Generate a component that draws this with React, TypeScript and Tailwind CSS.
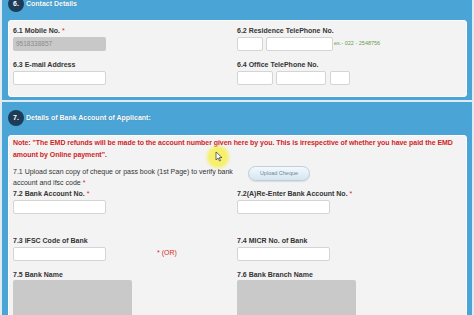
export default function App() {
  const label = "text-[7px] leading-[10px] font-bold text-[#333]";
  const input = "mt-[1px] h-[14px] bg-white border border-[#d4d4d4] rounded-[2px]";

  return (
    <div className="relative w-[474px] h-[315px] overflow-hidden bg-[#dfeaf1] font-['Liberation_Sans',Arial,sans-serif]">
      {/* Section 6: Contact details */}
      <div className="mx-[2px] mt-[-6px] bg-[#4aa5d6] pl-[6px] pr-[5px] pt-[2px] pb-[3px]">
        <div className="flex items-center h-[16px]">
          <div className="w-[16px] h-[16px] rounded-full bg-[#1e3b57] flex items-center justify-center text-[7px] font-bold text-white">
            6.
          </div>
          <span className="ml-[2px] text-[7px] font-bold text-white [text-shadow:0_0_1px_rgba(0,0,0,0.3)]">
            Contact Details
          </span>
        </div>

        <div className="mt-[8px] bg-[#f3f3f3] border border-white rounded-[3px] px-[4px] pt-[5px] pb-[11px]">
          <div className="grid grid-cols-[224px_1fr]">
            <div>
              <div className={label}>
                6.1 Mobile No. <span className="text-[#d22] font-normal">*</span>
              </div>
              <div className="mt-[1px] h-[14px] w-[93px] bg-[#c8c8c8] rounded-[2px] flex items-center pl-[3px] text-[6.5px] text-[#8c8c8c]">
                9518338857
              </div>
            </div>
            <div>
              <div className={label}>6.2 Residence TelePhone No.</div>
              <div className="flex items-center">
                <div className={`${input} w-[26px]`} />
                <div className={`${input} w-[67px] ml-[3px]`} />
                <span className="ml-[1px] text-[5.5px] text-[#6a9a52]">ex.- 022 - 2548756</span>
              </div>
            </div>

            <div className="mt-[9px]">
              <div className={label}>6.3 E-mail Address</div>
              <div className={`${input} w-[93px]`} />
            </div>
            <div className="mt-[9px]">
              <div className={label}>6.4 Office TelePhone No.</div>
              <div className="flex">
                <div className={`${input} w-[36px]`} />
                <div className={`${input} w-[50px] ml-[3px]`} />
                <div className={`${input} w-[20px] ml-[4px]`} />
              </div>
            </div>
          </div>
        </div>
      </div>

      {/* Section 7: Bank account */}
      <div className="mx-[2px] mt-[2px] bg-[#4aa5d6] pl-[6px] pr-[5px] pt-[8px] pb-[20px]">
        <div className="flex items-center h-[16px]">
          <div className="w-[16px] h-[16px] rounded-full bg-[#1e3b57] flex items-center justify-center text-[7px] font-bold text-white">
            7.
          </div>
          <span className="ml-[2px] text-[7px] font-bold text-white [text-shadow:0_0_1px_rgba(0,0,0,0.3)]">
            Details of Bank Account of Applicant:
          </span>
        </div>

        <div className="mt-[9px] bg-[#f3f3f3] border border-white rounded-[3px] px-[4px] pt-[1px] pb-[10px]">
          <p className="text-[7px] leading-[12px] font-bold text-[#cf1f1f] tracking-[-0.05px]">
            Note: "The EMD refunds will be made to the account number given here by you. This is irrespective of whether you have paid the EMD
            <br />
            amount by Online payment".
          </p>

          <div className="mt-[5px] flex items-start">
            <p className="w-[224px] text-[7px] leading-[11px] text-[#333]">
              7.1 Upload scan copy of cheque or pass book (1st Page) to verify bank
              <br />
              account and ifsc code <span className="text-[#d22]">*</span>
            </p>
            <button className="ml-[11px] h-[15px] w-[62px] rounded-full border border-[#b9d0de] bg-gradient-to-b from-[#f4f9fc] to-[#d5e5ef] text-[5.5px] text-[#6c86a0] shadow-[0_1px_1px_rgba(0,0,0,0.1)]">
              Upload Cheque
            </button>
          </div>

          <div className="mt-[1px] grid grid-cols-[224px_1fr]">
            <div>
              <div className={label}>
                7.2 Bank Account No. <span className="text-[#d22] font-normal">*</span>
              </div>
              <div className={`${input} w-[93px]`} />
            </div>
            <div>
              <div className={label}>
                7.2(A)Re-Enter Bank Account No. <span className="text-[#d22] font-normal">*</span>
              </div>
              <div className={`${input} w-[93px]`} />
            </div>

            <div className="mt-[22px]">
              <div className={label}>7.3 IFSC Code of Bank</div>
              <div className="flex items-center">
                <div className={`${input} w-[93px]`} />
                <span className="ml-[51px] text-[7px] text-[#d42a2a]">* (OR)</span>
              </div>
            </div>
            <div className="mt-[22px]">
              <div className={label}>7.4 MICR No. of Bank</div>
              <div className={`${input} w-[93px]`} />
            </div>

            <div className="mt-[9px]">
              <div className={label}>7.5 Bank Name</div>
              <div className="h-[45px] w-[119px] bg-[#c9c9c9] rounded-[2px]" />
            </div>
            <div className="mt-[9px]">
              <div className={label}>7.6 Bank Branch Name</div>
              <div className="h-[45px] w-[119px] bg-[#c9c9c9] rounded-[2px]" />
            </div>
          </div>
        </div>
      </div>

      {/* cursor highlight */}
      <div className="absolute left-[207px] top-[146px] w-[22px] h-[22px] rounded-full bg-[#f6ef4a]/80 blur-[1.5px]" />
      <svg className="absolute left-[215px] top-[151px]" width="8" height="11" viewBox="0 0 8 11">
        <path d="M1 1 L1 9 L3 7 L4.5 10 L5.6 9.5 L4.2 6.6 L7 6.6 Z" fill="white" stroke="#333" strokeWidth="0.7" strokeLinejoin="round" />
      </svg>
    </div>
  );
}
